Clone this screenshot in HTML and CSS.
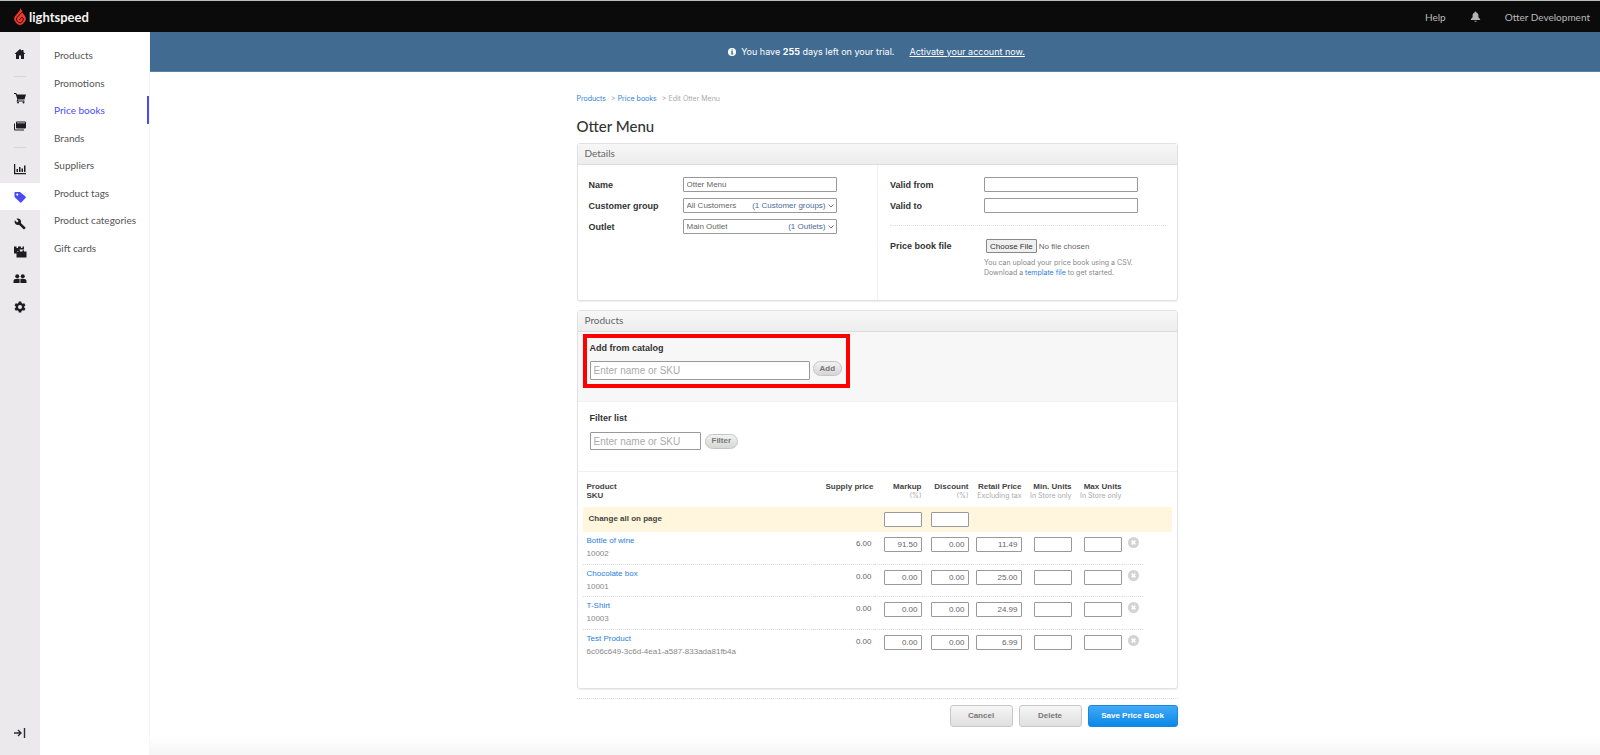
FILE: index.html
```html
<!DOCTYPE html>
<html lang="en">
<head>
<meta charset="utf-8">
<title>Otter Menu - Price books</title>
<link rel="stylesheet" href="styles.css">
</head>
<body>
<header class="topbar">
  <a class="brand" href="#">
    <svg class="brand-mark" viewBox="0 0 24 34">
      <path fill="#f0392b" d="M12 0 L16.500 6 Q17 7.500 16 8.500 L21.500 15.500 Q26 21.500 21.500 27.500 L17.500 32 Q12 36 6.500 32 L2.500 27.500 Q-2 21.500 2.500 16 L10.500 6.500 Q12.500 3.500 12 0z"/>
      <path fill="none" stroke="#0b0b0b" stroke-width="1.800" d="M15.500 8.500 L6 19 Q3.500 22.500 6 25.500 L9.500 29 Q12 30.500 14.500 29 L18 25 Q19.500 22.500 18 20 L16 18 L10.500 24"/>
    </svg>
    <span>lightspeed</span>
  </a>
  <nav class="top-links">
    <a href="#">Help</a>
    <button class="bell" type="button" aria-label="Notifications">
      <svg viewBox="0 0 20 20" fill="#b4b4b4"><path d="M10 1c-1 0-1.600.6-1.600 1.500C5.800 3.300 4.700 5.400 4.700 8v3.500L1.500 15v1.500h17V15l-3.200-3.500V8c0-2.600-1.100-4.700-3.700-5.500C11.600 1.600 11 1 10 1zM7.600 17.500a2.400 2 0 0 0 4.800 0z"/></svg>
    </button>
    <a href="#">Otter Development</a>
  </nav>
</header>
<div class="shell">
  <nav class="rail" aria-label="Main">
    <a class="rail-item" href="#" aria-label="Home"><svg viewBox="0 0 24 24"><path d="M12 2 1 12h3v10h6v-7h4v7h6V12h3l-4-3.700V4h-3v1.600z"/></svg></a>
    <span class="rail-rule"></span>
    <a class="rail-item" href="#" aria-label="Sell"><svg viewBox="0 0 24 24"><path d="M0 2h4.500l1.300 3H24l-3 10H8.500l-.7 2H21v2H5l1.700-4.700L3.200 4H0z"/><circle cx="8" cy="21" r="1.900"/><circle cx="19" cy="21" r="1.900"/></svg></a>
    <a class="rail-item rail-short" href="#" aria-label="Sales ledger"><svg viewBox="0 0 24 24"><path d="M6 3h16a2 2 0 0 1 2 2v10a2 2 0 0 1-2 2H6a2 2 0 0 1-2-2V5a2 2 0 0 1 2-2zm0 2v1.500h16V5z" fill-rule="evenodd"/><path d="M0 7h2v12h18v2H2a2 2 0 0 1-2-2z"/></svg></a>
    <span class="rail-rule"></span>
    <a class="rail-item" href="#" aria-label="Reporting"><svg viewBox="0 0 24 24"><path d="M0 2h2.500v18H24v2.500H0zM5 12h3v6H5zM10 8h3v10h-3zM15 11h3v7h-3zM20 5h3v13h-3z"/></svg></a>
    <a class="rail-item rail-short is-active" href="#" aria-label="Catalog"><svg viewBox="0 0 24 24"><path fill-rule="evenodd" d="M2 2h10l11.500 9.500a1.500 1.500 0 0 1 0 2L14.500 23a1.500 1.500 0 0 1-2 0L1 12V3a1 1 0 0 1 1-1zm4.500 3a2.200 2.200 0 1 0 0 4.400 2.200 2.200 0 0 0 0-4.400z"/></svg></a>
    <a class="rail-item" href="#" aria-label="Setup"><svg viewBox="0 0 24 24"><path d="M23 19 13.800 9.800c.9-2.300.4-5-1.500-6.900C10.300.9 7.300.5 4.900 1.600l4.300 4.300-3 3-4.400-4.300c-1.100 2.400-.7 5.400 1.300 7.400 1.900 1.900 4.600 2.400 6.900 1.500l9.200 9.200c.4.400 1 .4 1.400 0l2.300-2.300c.5-.4.5-1.100.1-1.400z"/></svg></a>
    <a class="rail-item rail-short" href="#" aria-label="Inventory"><svg viewBox="0 0 24 24"><path d="M0 1h5v3h3V1h6v3h3V1h3v6h-9v3H6v5H0z"/><path d="M5 11h4V8.500h3V11h5V8.500h3V11h5v12H5z"/></svg></a>
    <a class="rail-item" href="#" aria-label="Customers"><svg viewBox="0 0 24 24"><circle cx="6.500" cy="6.500" r="4"/><circle cx="17.500" cy="6.500" r="4"/><path d="M-1 20v-4c0-3 3-4.500 7.500-4.500 1.800 0 3.400.2 4.700.6V20zM12.800 20v-7.900c1.300-.4 2.900-.6 4.700-.6 4.500 0 7.500 1.500 7.500 4.500v4z"/></svg></a>
    <a class="rail-item rail-short" href="#" aria-label="Settings"><svg viewBox="0 0 24 24"><path fill-rule="evenodd" d="M9.500 1h5l.6 3.200 2.200 1.300 3.100-1.100 2.500 4.300-2.500 2.100v2.400l2.500 2.100-2.500 4.300-3.100-1.100-2.200 1.300-.6 3.200h-5l-.6-3.200-2.200-1.300-3.100 1.100-2.500-4.300 2.500-2.100v-2.400L1.100 8.700l2.500-4.300 3.100 1.100 2.200-1.300zM12 8a4 4 0 1 0 0 8 4 4 0 0 0 0-8z"/></svg></a>
    <button class="rail-item rail-toggle" type="button" aria-label="Expand menu"><svg viewBox="0 0 24 24" fill="none" stroke="#2b2b33" stroke-width="2.800"><path d="M0 12h15M8 6l6 6-6 6M21 2v20"/></svg></button>
  </nav>
  <nav class="subnav" aria-label="Catalog">
    <a href="#">Products</a>
    <a href="#">Promotions</a>
    <a class="is-current" href="#">Price books</a>
    <a href="#">Brands</a>
    <a href="#">Suppliers</a>
    <a href="#">Product tags</a>
    <a href="#">Product categories</a>
    <a href="#">Gift cards</a>
  </nav>
  <div class="page">
    <div class="trial">
      <svg viewBox="0 0 16 16"><circle cx="8" cy="8" r="8" fill="#fff"/><path d="M6.700 2.800h3v2.400h-3zM5.700 6.500h4v4.800h1.200v1.700H5.500v-1.700h1.200V8.200h-1z" fill="#416b91"/></svg>
      <span>You have <b>255</b> days left on your trial.</span>
      <a href="#">Activate your account now.</a>
    </div>
    <main class="content">
      <nav class="crumbs" aria-label="Breadcrumb">
        <a href="#">Products</a><span>&gt; <a href="#">Price books</a></span><span>&gt; Edit Otter Menu</span>
      </nav>
      <h1>Otter Menu</h1>
      <section class="panel">
        <h2>Details</h2>
        <div class="details">
          <div class="details-side">
            <div class="field"><label for="name">Name</label><input class="control" id="name" type="text" value="Otter Menu"></div>
            <div class="field"><label for="group">Customer group</label>
              <div class="picker"><select class="control" id="group"><option>All Customers</option></select><span class="picker-note">(1 Customer groups) <svg viewBox="0 0 12 8"><path d="m1 1 5 5 5-5"/></svg></span></div></div>
            <div class="field"><label for="outlet">Outlet</label>
              <div class="picker"><select class="control" id="outlet"><option>Main Outlet</option></select><span class="picker-note">(1 Outlets) <svg viewBox="0 0 12 8"><path d="m1 1 5 5 5-5"/></svg></span></div></div>
          </div>
          <div class="details-side">
            <div class="field"><label for="from">Valid from</label><input class="control" id="from" type="text"></div>
            <div class="field"><label for="to">Valid to</label><input class="control" id="to" type="text"></div>
            <div class="upload">
              <label for="file">Price book file</label>
              <div>
                <input class="file" id="file" type="file">
                <p>You can upload your price book using a CSV.<br>Download a <a href="#">template file</a> to get started.</p>
              </div>
            </div>
          </div>
        </div>
      </section>
      <section class="panel">
        <h2>Products</h2>
        <form class="add">
          <label for="add">Add from catalog</label>
          <div class="search"><input class="control search-wide" id="add" type="text" placeholder="Enter name or SKU"><button class="pill" type="button">Add</button></div>
          <div class="highlight"></div>
        </form>
        <form class="filter">
          <label for="filter">Filter list</label>
          <div class="search search-filter"><input class="control" id="filter" type="text" placeholder="Enter name or SKU"><button class="pill" type="button">Filter</button></div>
        </form>
        <div class="table-wrap">
          <table>
            <colgroup><col><col class="c-supply"><col class="c-markup"><col class="c-discount"><col class="c-retail"><col class="c-units"><col class="c-units"><col class="c-remove"><col class="c-end"></colgroup>
            <thead>
              <tr><th class="name">Product<br>SKU</th><th>Supply price</th><th>Markup<small>(%)</small></th><th>Discount<small>(%)</small></th><th>Retail Price<small>Excluding tax</small></th><th>Min. Units<small>In Store only</small></th><th>Max Units<small>In Store only</small></th><th></th><th></th></tr>
            </thead>
            <tbody>
              <tr class="bulk"><th class="name">Change all on page</th><td></td><td><input class="control" aria-label="Markup for all"></td><td><input class="control" aria-label="Discount for all"></td><td></td><td></td><td></td><td></td><td></td></tr>
              <tr class="item"><td class="name"><a href="#">Bottle of wine</a><span>10002</span></td><td class="supply">6.00</td><td><input class="control" aria-label="Markup" value="91.50"></td><td><input class="control" aria-label="Discount" value="0.00"></td><td><input class="control retail" aria-label="Retail price" value="11.49"></td><td><input class="control" aria-label="Min units"></td><td><input class="control" aria-label="Max units"></td><td><button class="remove" type="button" aria-label="Remove"><svg viewBox="0 0 12 12"><circle cx="6" cy="6" r="6"/><path d="m4 4 4 4M8 4 4 8"/></svg></button></td><td></td></tr>
              <tr class="item"><td class="name"><a href="#">Chocolate box</a><span>10001</span></td><td class="supply">0.00</td><td><input class="control" aria-label="Markup" value="0.00"></td><td><input class="control" aria-label="Discount" value="0.00"></td><td><input class="control retail" aria-label="Retail price" value="25.00"></td><td><input class="control" aria-label="Min units"></td><td><input class="control" aria-label="Max units"></td><td><button class="remove" type="button" aria-label="Remove"><svg viewBox="0 0 12 12"><circle cx="6" cy="6" r="6"/><path d="m4 4 4 4M8 4 4 8"/></svg></button></td><td></td></tr>
              <tr class="item"><td class="name"><a href="#">T-Shirt</a><span>10003</span></td><td class="supply">0.00</td><td><input class="control" aria-label="Markup" value="0.00"></td><td><input class="control" aria-label="Discount" value="0.00"></td><td><input class="control retail" aria-label="Retail price" value="24.99"></td><td><input class="control" aria-label="Min units"></td><td><input class="control" aria-label="Max units"></td><td><button class="remove" type="button" aria-label="Remove"><svg viewBox="0 0 12 12"><circle cx="6" cy="6" r="6"/><path d="m4 4 4 4M8 4 4 8"/></svg></button></td><td></td></tr>
              <tr class="item"><td class="name"><a href="#">Test Product</a><span>6c06c649-3c6d-4ea1-a587-833ada81fb4a</span></td><td class="supply">0.00</td><td><input class="control" aria-label="Markup" value="0.00"></td><td><input class="control" aria-label="Discount" value="0.00"></td><td><input class="control retail" aria-label="Retail price" value="6.99"></td><td><input class="control" aria-label="Min units"></td><td><input class="control" aria-label="Max units"></td><td><button class="remove" type="button" aria-label="Remove"><svg viewBox="0 0 12 12"><circle cx="6" cy="6" r="6"/><path d="m4 4 4 4M8 4 4 8"/></svg></button></td><td></td></tr>
            </tbody>
          </table>
        </div>
      </section>
      <div class="actions">
        <button class="btn" type="button">Cancel</button>
        <button class="btn" type="button">Delete</button>
        <button class="btn btn-primary" type="button">Save Price Book</button>
      </div>
    </main>
  </div>
</div>
</body>
</html>
```

FILE: styles.css
```css
* { box-sizing: border-box; }

body {
  margin: 0;
  min-height: 100vh;
  display: flex;
  flex-direction: column;
  font: 8px/10px "Liberation Sans", Arial, sans-serif;
  color: #666;
  background: #fff;
}

a { color: #2a80dc; text-decoration: none; }
button, input, select { font: inherit; color: inherit; }
button { cursor: pointer; }
svg { display: block; }

/* Top bar */
.topbar {
  display: flex;
  justify-content: space-between;
  align-items: center;
  height: 32px;
  padding: 0 10px 0 14px;
  border-top: 1px solid #b9bfbd;
  background: #0b0b0b;
  font: 10px/16px Lato, sans-serif;
}
.topbar a { color: #b9b9b9; }
.topbar .brand {
  display: flex;
  align-items: center;
  gap: 3px;
  color: #f4f4f4;
  font-size: 13px;
  font-weight: 700;
}
.brand-mark { width: 12px; height: 17px; }
.top-links { display: flex; align-items: center; gap: 24px; }
.bell { padding: 0; border: 0; background: none; }
.bell svg { width: 11px; height: 11px; }

.shell { display: flex; flex: 1; }

/* Icon rail */
.rail {
  display: flex;
  flex: none;
  flex-direction: column;
  width: 40px;
  padding: 8px 0;
  background: #ebe9ec;
}
.rail-item {
  display: flex;
  align-items: center;
  justify-content: center;
  height: 28px;
  padding: 0;
  border: 0;
  background: none;
}
.rail-short { height: 27px; }
.rail-item svg { width: 12px; height: 12px; fill: #1c1c22; overflow: visible; }
.rail-rule { height: 1px; margin: 8px 14px 7px; background: #d6d4d8; }
.rail-item.is-active { background: #fff; }
.rail-item.is-active svg { fill: #4b4bf5; }
.rail-toggle { margin-top: auto; }
.rail-toggle svg { fill: none; }

/* Catalog menu */
.subnav {
  display: flex;
  flex: none;
  flex-direction: column;
  width: 110px;
  padding-top: 9px;
  background: #fff;
  font: 10px/14px Lato, sans-serif;
}
.subnav a {
  display: flex;
  align-items: center;
  height: 28px;
  padding-left: 14px;
  border-right: 3px solid transparent;
  color: #555;
}
.subnav a:nth-child(even) { height: 27px; }
.subnav .is-current { color: #4b4bf5; border-color: #4b4bf5; }

/* Page */
.page {
  flex: 1;
  min-width: 0;
  box-shadow: -1px 0 0 #f6f6f6;
  background: linear-gradient(#fff, #f5f5f5) bottom / 100% 20px no-repeat;
}
.trial {
  display: flex;
  align-items: center;
  justify-content: center;
  gap: 5px;
  height: 40px;
  padding-left: 3px;
  background: #416b91;
  border-bottom: 1px solid #5b82a4;
  color: #fff;
  font: 9px/12px Inter, "Liberation Sans", sans-serif;
}
.trial svg { width: 8px; height: 8px; }
.trial a { margin-left: 10px; color: #fff; text-decoration: underline; }

.content { width: 100%; max-width: 605px; margin: 0 auto; padding: 21px 0 0 4px; }
.crumbs { display: flex; gap: 5px; color: #aaa; font: 7px/11px Inter, "Liberation Sans", sans-serif; }
h1 { margin: 12px 0 7px; color: #333; font: 500 15px/20px Lato, sans-serif; }

.panel {
  margin-bottom: 9px;
  border: 1px solid #e2e2e2;
  border-radius: 3px;
  box-shadow: 0 1px 1px #eee;
}
.panel h2 {
  margin: 0;
  padding: 3px 7px 4px;
  border-bottom: 1px solid #dcdcdc;
  background: linear-gradient(#f7f7f7, #ededed);
  color: #666;
  font: 10px/13px Lato, sans-serif;
}
label { color: #333; font-size: 9px; font-weight: 700; line-height: 12px; }

.control {
  width: 100%;
  height: 15px;
  padding: 0 3px;
  border: 1px solid #999;
  border-radius: 1px;
  background: #fff;
  appearance: none;
}

.details { display: grid; grid-template-columns: 1fr 1fr; }
.details-side { padding: 12px 11px; min-height: 135px; }
.details-side + .details-side { padding-left: 12px; border-left: 1px solid #f0f0f0; }
.field, .upload { display: grid; grid-template-columns: 94px 1fr; }
.field { grid-template-columns: 94px 154px; align-items: center; margin-bottom: 6px; }
.picker { position: relative; }
.picker .control { display: block; }
.picker-note {
  position: absolute;
  top: 3px;
  right: 3px;
  display: flex;
  align-items: center;
  gap: 2px;
  color: #4a6c96;
  pointer-events: none;
}
.picker-note svg { width: 6px; height: 4px; fill: none; stroke: #777; stroke-width: 2; }
.upload { margin-top: 12px; padding-top: 13px; border-top: 1px dotted #ddd; }
.upload label { padding-top: 1px; }
.upload p { margin: 5px 0 0; color: #888; font: 7px/10px Inter, "Liberation Sans", sans-serif; }
.file { display: block; width: 100%; padding-left: 2px; }
.file::file-selector-button {
  height: 14px;
  margin: 0 2px 0 0;
  padding: 0 3px;
  border: 1px solid #888;
  border-radius: 1px;
  background: #efefef;
  color: #333;
}

/* Add and filter forms */
.add, .filter { padding: 10px 12px 0; border-bottom: 1px solid #f0f0f0; }
.add { position: relative; height: 70px; background: #f7f7f7; }
.filter { height: 70px; }
.add label, .filter label { display: block; }
.search { display: flex; align-items: flex-start; gap: 3px; margin-top: 7px; }
.search .control { width: 111px; height: 18px; font-size: 10px; line-height: 14px; }
.search .search-wide { width: 220px; height: 19px; }
.search-filter { align-items: center; gap: 4px; margin-top: 8px; }
::placeholder { color: #aaa; opacity: 1; }
.pill {
  height: 15px;
  padding: 0 6px;
  border: 1px solid #c4c4c4;
  border-radius: 8px;
  background: linear-gradient(#f2f2f2, #d6d6d6);
  color: #777;
  font-weight: 700;
}
.highlight {
  position: absolute;
  top: 2px;
  left: 5px;
  width: 267px;
  height: 54px;
  border: 4px solid #fe0000;
  pointer-events: none;
}

/* Price table */
.table-wrap { padding: 10px 5px 26px; }
table { width: 100%; table-layout: fixed; border-spacing: 0; }
th, td { padding: 0; text-align: right; vertical-align: top; }
th { color: #444; line-height: 9px; }
th small { display: block; color: #aaa; font: 7px/9px Inter, "Liberation Sans", sans-serif; }
thead th { height: 25px; white-space: nowrap; }
th.name, td.name { padding-left: 4px; text-align: left; }
.c-supply { width: 60px; }
.c-markup { width: 48px; }
.c-discount { width: 47px; }
.c-retail { width: 53px; }
.c-units { width: 50px; }
.c-remove { width: 21px; }
.c-end { width: 29px; }
td .control { display: block; width: 38px; margin-left: auto; text-align: right; }
td .retail { width: 46px; }
.bulk th, .bulk td { height: 25px; padding-top: 5px; background: #fff6dd; }
.bulk .name { padding: 7px 0 0 6px; }
.item td { height: 33px; padding-top: 5px; border-bottom: 1px dotted #ddd; }
.item:nth-child(odd) td { height: 32px; }
.item td:last-child, .item:last-child td { border-bottom: 0; }
.item td.name { padding-top: 4px; }
.item .name span { display: block; margin-top: 3px; color: #888; }
.item .supply { padding: 7px 2px 0 0; }
.remove { display: block; margin-left: 6px; padding: 0; border: 0; background: none; }
.remove svg { width: 11px; height: 11px; fill: #d3d3d3; stroke: #fff; stroke-width: 2; }
.remove circle { stroke: none; }

.actions {
  display: flex;
  justify-content: flex-end;
  gap: 6px;
  padding: 6px 0 20px;
  border-top: 1px dotted #ddd;
}
.btn {
  min-width: 63px;
  height: 22px;
  border: 1px solid #c8c8c8;
  border-radius: 3px;
  background: linear-gradient(#f6f6f6, #dfdfdf);
  color: #777;
  font-weight: 700;
}
.btn-primary {
  min-width: 90px;
  border-color: #1c86dc;
  background: linear-gradient(#41aaf8, #0b88e8);
  color: #fff;
}
```
